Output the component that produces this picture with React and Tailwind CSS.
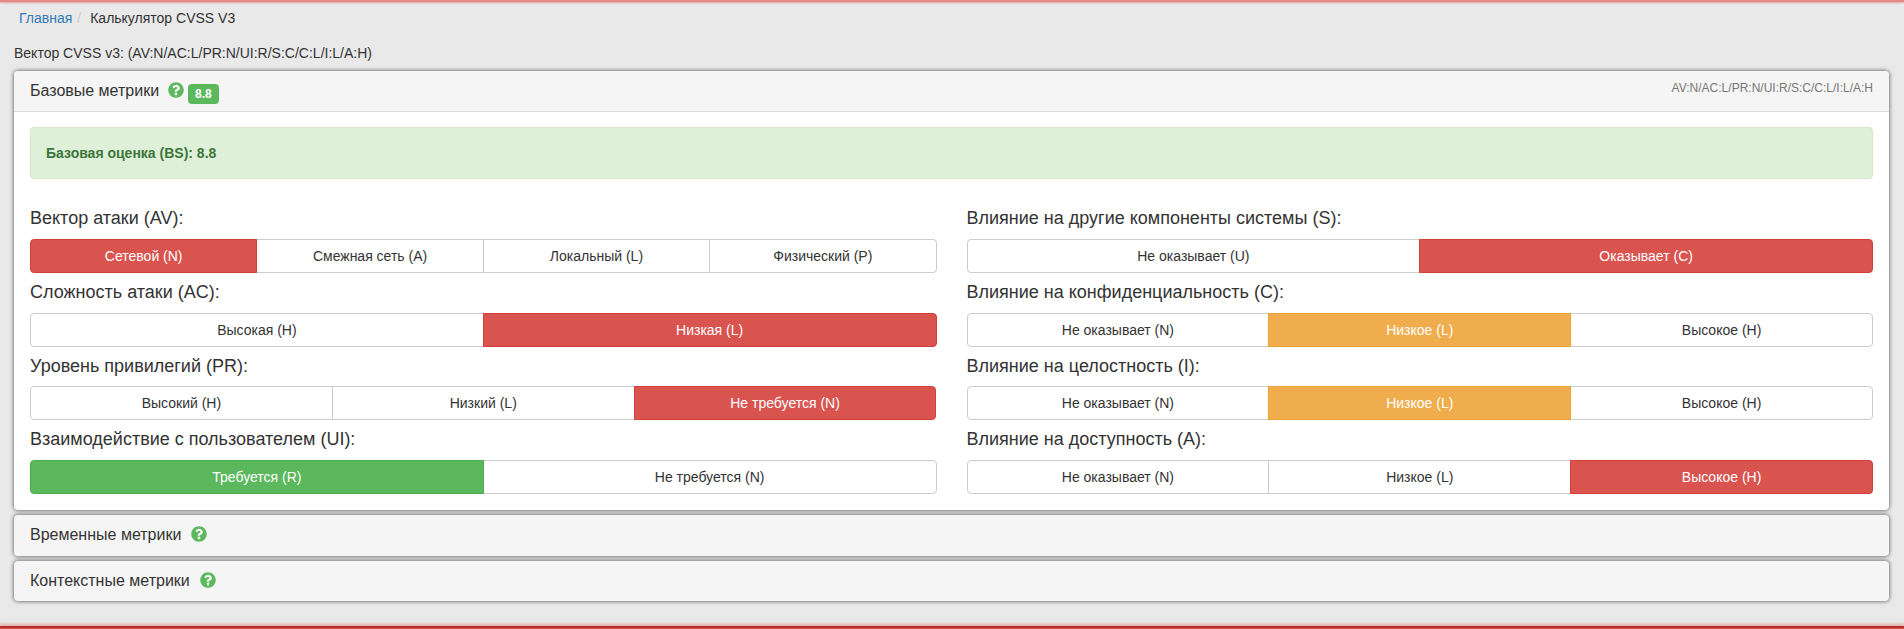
import { FaQuestionCircle } from 'react-icons/fa'

const leftGroups = [
  {
    title: 'Вектор атаки (AV):',
    options: ['Сетевой (N)', 'Смежная сеть (A)', 'Локальный (L)', 'Физический (P)'],
    active: 0,
    tone: 'danger',
  },
  { title: 'Сложность атаки (AC):', options: ['Высокая (H)', 'Низкая (L)'], active: 1, tone: 'danger' },
  {
    title: 'Уровень привилегий (PR):',
    options: ['Высокий (H)', 'Низкий (L)', 'Не требуется (N)'],
    active: 2,
    tone: 'danger',
  },
  {
    title: 'Взаимодействие с пользователем (UI):',
    options: ['Требуется (R)', 'Не требуется (N)'],
    active: 0,
    tone: 'success',
  },
]

const rightGroups = [
  {
    title: 'Влияние на другие компоненты системы (S):',
    options: ['Не оказывает (U)', 'Оказывает (C)'],
    active: 1,
    tone: 'danger',
  },
  {
    title: 'Влияние на конфиденциальность (C):',
    options: ['Не оказывает (N)', 'Низкое (L)', 'Высокое (H)'],
    active: 1,
    tone: 'warning',
  },
  {
    title: 'Влияние на целостность (I):',
    options: ['Не оказывает (N)', 'Низкое (L)', 'Высокое (H)'],
    active: 1,
    tone: 'warning',
  },
  {
    title: 'Влияние на доступность (A):',
    options: ['Не оказывает (N)', 'Низкое (L)', 'Высокое (H)'],
    active: 2,
    tone: 'danger',
  },
]

const tones = {
  danger: 'bg-[#d9534f] border-[#d43f3a] text-white z-10',
  warning: 'bg-[#f0ad4e] border-[#eea236] text-white z-10',
  success: 'bg-[#5cb85c] border-[#4cae4c] text-white z-10',
}

function HelpIcon({ className }) {
  return <FaQuestionCircle className={`text-[16px] text-[#5cb85c] ${className}`} />
}

function MetricGroup({ group }) {
  return (
    <div>
      <h4 className="my-[10px] text-[18px] leading-[19.8px] font-medium text-[#333]">{group.title}</h4>
      <div className="flex">
        {group.options.map((option, i) => (
          <button
            key={option}
            className={`relative h-[34px] min-w-0 flex-1 basis-0 border pt-px text-center text-[14px] ${
              i === 0 ? 'rounded-l-[4px]' : '-ml-px'
            } ${i === group.options.length - 1 ? 'rounded-r-[4px]' : ''} ${
              i === group.active ? tones[group.tone] : 'border-[#ccc] bg-white text-[#333]'
            }`}
          >
            {option}
          </button>
        ))}
      </div>
    </div>
  )
}

function CollapsedPanel({ title }) {
  return (
    <div className="mt-[5px] flex h-[40.6px] items-center rounded-[4px] bg-[#f5f5f5] px-[16px] shadow-[0_0_4px_rgba(0,0,0,0.7)]">
      <span className="text-[16px] text-[#333]">{title}</span>
      <HelpIcon className="ml-[10px] -mt-[2px]" />
    </div>
  )
}

export default function App() {
  return (
    <div className="flex h-[629px] flex-col overflow-hidden bg-[#e9e9e9] font-['Liberation_Sans',Arial,sans-serif] text-[14px] text-[#333]">
      <div className="h-[2px] shrink-0 bg-[#e58a87] shadow-[0_1px_2px_rgba(217,83,79,0.5)]" />

      <div className="flex-1 pr-[15px] pl-[14px]">
        {/* Breadcrumb */}
        <div className="flex h-[32px] items-center pl-[5px]">
          <a className="text-[#337ab7]">Главная</a>
          <span className="px-[5px] text-[#ccc]">/</span>
          <span className="ml-[4px]">Калькулятор CVSS V3</span>
        </div>

        <div className="mt-[9px] leading-[20px]">Вектор CVSS v3: (AV:N/AC:L/PR:N/UI:R/S:C/C:L/I:L/A:H)</div>

        {/* Base metrics */}
        <div className="mt-[8px] rounded-[4px] bg-white shadow-[0_0_4px_rgba(0,0,0,0.7)]">
          <div className="flex h-[41px] items-start justify-between rounded-t-[4px] border-b border-[#ddd] bg-[#f5f5f5] px-[16px]">
            <div className="flex h-full items-center">
              <span className="text-[16px] text-[#333]">Базовые метрики</span>
              <HelpIcon className="ml-[9px] -mt-[3px]" />
              <span className="ml-[4px] mt-[5px] rounded-[4px] bg-[#5cb85c] px-[7px] py-[3px] text-[12px] leading-[14px] font-bold text-white">
                8.8
              </span>
            </div>
            <span className="mt-[10px] text-[12px] leading-[14px] text-[#777]">AV:N/AC:L/PR:N/UI:R/S:C/C:L/I:L/A:H</span>
          </div>

          <div className="px-[16px] pt-[15px] pb-[16px]">
            <div className="flex h-[52px] items-center rounded-[4px] border border-[#d6e9c6] bg-[#dff0d8] px-[15px] font-bold text-[#3c763d]">
              Базовая оценка (BS): 8.8
            </div>

            <div className="mt-[20px] grid grid-cols-2 gap-x-[30px]">
              <div>
                {leftGroups.map((group) => (
                  <MetricGroup key={group.title} group={group} />
                ))}
              </div>
              <div>
                {rightGroups.map((group) => (
                  <MetricGroup key={group.title} group={group} />
                ))}
              </div>
            </div>
          </div>
        </div>

        <CollapsedPanel title="Временные метрики" />
        <CollapsedPanel title="Контекстные метрики" />
      </div>

      <div className="h-[3px] shrink-0 border-t-2 border-[#b5302c] bg-[#d9534f] shadow-[0_-2px_3px_rgba(217,83,79,0.45)]" />
    </div>
  )
}
